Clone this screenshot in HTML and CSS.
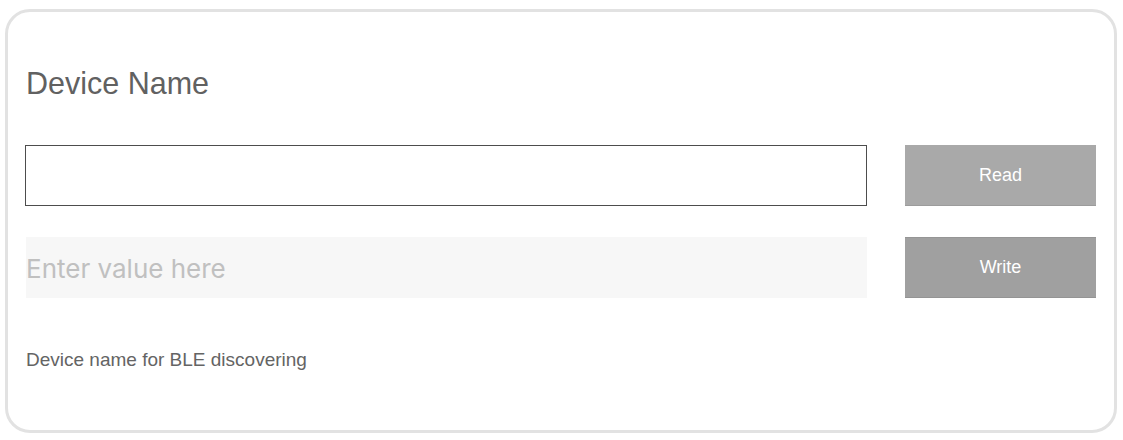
FILE: index.html
```html
<!DOCTYPE html>
<html>
<head>
<meta charset="utf-8">
<link rel="stylesheet" href="styles.css">
</head>
<body>
<div class="card">
  <h2 class="title">Device Name</h2>
  <div class="row">
    <div class="field field-read"></div>
    <button class="btn btn-read">Read</button>
  </div>
  <div class="row row-write">
    <input class="field field-write" type="text" placeholder="Enter value here">
    <button class="btn btn-write">Write</button>
  </div>
  <p class="hint">Device name for BLE discovering</p>
</div>
</body>
</html>
```

FILE: styles.css
```css
html, body {
  margin: 0;
  padding: 0;
  background: #ffffff;
}
body {
  padding: 9px 0 0 5px;
  font-family: "Liberation Sans", Arial, sans-serif;
}
.card {
  box-sizing: border-box;
  width: 1112px;
  height: 424px;
  border: 3px solid #e2e2e2;
  border-radius: 25px;
  padding: 56px 18px 0 18px;
  display: flex;
  flex-direction: column;
}
.title {
  margin: 0;
  font-size: 30.5px;
  line-height: 30px;
  font-weight: normal;
  color: #616161;
}
.row {
  display: grid;
  grid-template-columns: 1fr 191px;
  column-gap: 38px;
  height: 61px;
  margin-top: 47px;
}
.row-write {
  margin-top: 31px;
}
.field {
  box-sizing: border-box;
  height: 61px;
}
.field-read {
  border: 1.5px solid #4d4d4d;
  margin-left: -1px;
  background: #fff;
}
.field-write {
  border: none;
  outline: none;
  background: #f7f7f7;
  padding: 1px 0 0 0;
  width: 100%;
  font-family: Inter, "Liberation Sans", Arial, sans-serif;
  font-size: 26px;
  color: #333;
}
.field-write::placeholder {
  color: #c0c0c0;
}
.btn {
  border: none;
  padding: 0;
  height: 61px;
  color: #ffffff;
  font-family: "Liberation Sans", Arial, sans-serif;
  font-size: 18px;
}
.btn-read {
  background: #a9a9a9;
  border-bottom: 1px solid #9c9c9c;
}
.btn-write {
  background: #a0a0a0;
  border-top: 1px solid #959595;
  border-bottom: 1px solid #949494;
}
.hint {
  margin: 52px 0 0 0;
  font-size: 19px;
  line-height: 19px;
  color: #646464;
}
```
